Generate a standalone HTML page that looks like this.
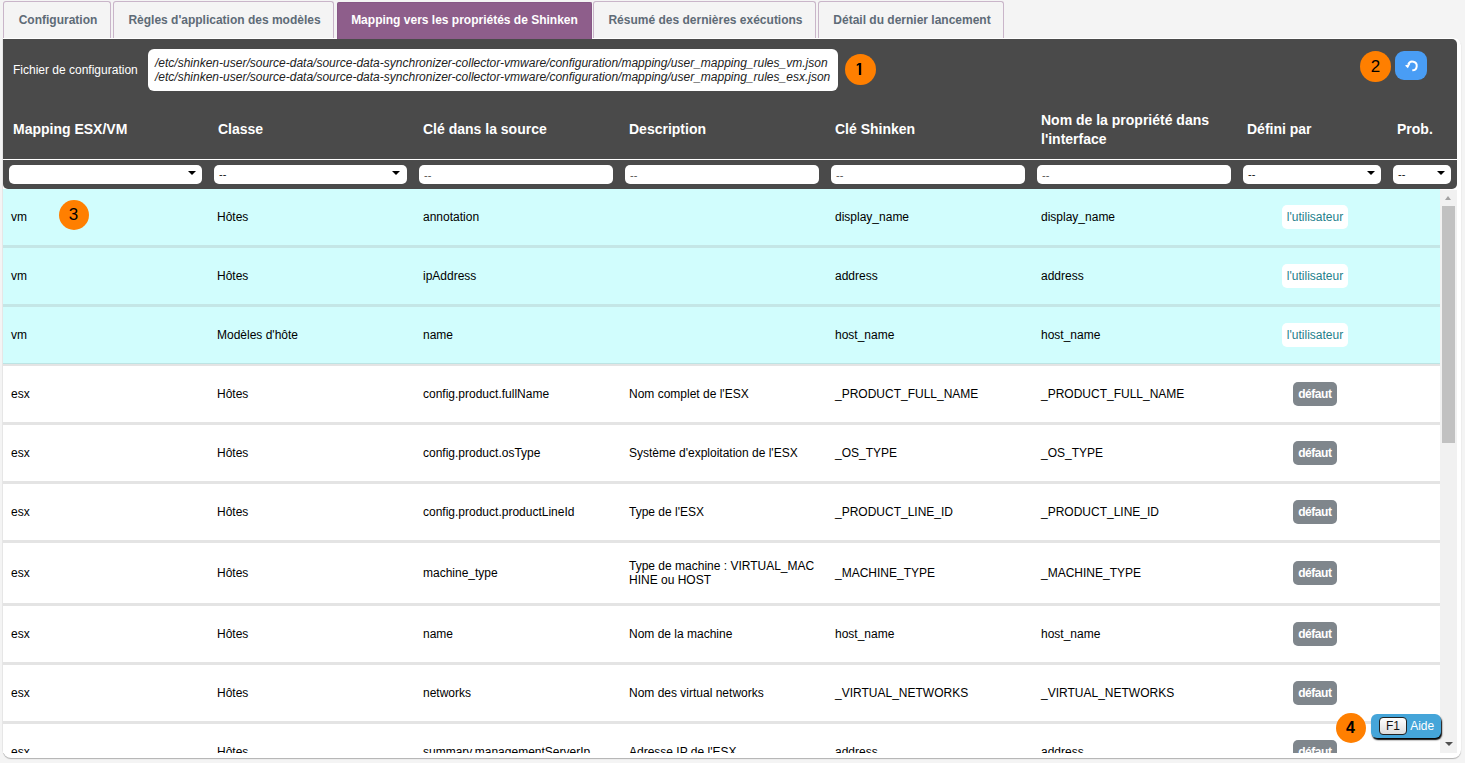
<!DOCTYPE html>
<html><head><meta charset="utf-8">
<style>
*{box-sizing:border-box;margin:0;padding:0}
html,body{width:1465px;height:763px;overflow:hidden;background:#f4f4f4;font-family:"Liberation Sans",sans-serif;font-size:12px;color:#000}
.abs{position:absolute}
.tab{position:absolute;z-index:2;top:1px;height:37px;border:1px solid #c9b5c9;border-bottom:none;border-radius:3px 3px 0 0;background:#f4f4f4;color:#5e6b77;font-weight:bold;font-size:12px;padding-left:2px;text-align:center;line-height:36px;white-space:nowrap}
.tab.active{padding-left:0;top:2px;height:37px;background:#8e5e8b;border:1px solid #875786;border-bottom:none;border-radius:2px 2px 0 0;color:#fff;line-height:35px}
#cont{position:absolute;left:3px;top:38px;width:1458px;height:720px;background:#fff;border-radius:0 7px 8px 8px;box-shadow:0 1px 1px rgba(0,0,0,.28),-0.5px 0 0 rgba(0,0,0,.06)}
#dark{position:absolute;left:3px;top:39px;width:1454px;height:150px;background:#4a4a4a;border-radius:0 5px 5px 5px}
.lbl{position:absolute;color:#fff;font-size:12px;white-space:nowrap}
.hd{position:absolute;color:#fff;font-weight:bold;font-size:14px;white-space:nowrap;line-height:19px}
.flt{position:absolute;top:165px;height:19px;background:#fff;border-radius:5px}
.flt .dd{position:absolute;left:5px;top:4px;font-size:11px;line-height:11px;color:#111}
.flt.inp .dd{color:#555;top:5px}
.flt .ar{position:absolute;top:6px;width:0;height:0;border-left:4px solid transparent;border-right:4px solid transparent;border-top:4.5px solid #000}
.badge{position:absolute;width:30px;height:30px;border-radius:50%;background:#ff7f00;color:#000;font-size:16px;text-align:center;line-height:30px}
#body{position:absolute;left:3px;top:189px;width:1437px;height:564px;overflow:hidden}
.row{position:relative;height:59px;border-bottom:3px solid #e4e4e4;background:#fff}
.row.c{background:#d1fdfd;border-bottom-color:#c4e6e6}
.row .t{position:absolute;white-space:nowrap;line-height:14px}
.ub{position:absolute;left:1279px;width:66px;height:24px;background:#fff;border-radius:5px;color:#24808b;text-align:center;line-height:24px}
.db{position:absolute;left:1290px;width:44px;height:24px;background:#7f868c;border-radius:5px;color:#fff;font-weight:bold;text-align:center;line-height:24px;font-size:12px;letter-spacing:-0.45px;text-indent:-0.45px}
#sb{position:absolute;left:1440px;top:190px;width:17px;height:563px;background:#f1f1f1}
</style></head><body>
<!-- tabs -->
<div class="tab" style="left:3px;width:108px">Configuration</div>
<div class="tab" style="left:113px;width:221px">Règles d'application des modèles</div>
<div class="tab active" style="left:337px;width:255px">Mapping vers les propriétés de Shinken</div>
<div class="tab" style="left:593px;width:223px">Résumé des dernières exécutions</div>
<div class="tab" style="left:818px;width:186px">Détail du dernier lancement</div>

<div id="cont"></div>
<div id="dark"></div>

<!-- config row -->
<div class="lbl" style="left:13px;top:63px;line-height:14px">Fichier de configuration</div>
<div class="abs" style="left:148px;top:49px;width:690px;height:42px;background:#fff;border-radius:6px;padding:7px 0 0 7px;font-style:italic;color:#222;line-height:14px;white-space:nowrap">/etc/shinken-user/source-data/source-data-synchronizer-collector-vmware/configuration/mapping/user_mapping_rules_vm.json<br>/etc/shinken-user/source-data/source-data-synchronizer-collector-vmware/configuration/mapping/user_mapping_rules_esx.json</div>
<div class="badge" style="left:845px;top:54px;width:31px;height:31px"><svg class="abs" style="left:0;top:0" width="31" height="31"><path d="M13.9 9 H16.2 V21 H13.9 V10.9 L11.8 11.9 V10.4 Z" fill="#000"/></svg></div>
<div class="badge" style="left:1360px;top:51px;width:31px;height:31px;line-height:32px;font-size:17px">2</div>
<div class="abs" style="left:1395px;top:51px;width:32px;height:29px;background:#499df5;border-radius:9px"><svg class="abs" style="left:5px;top:4px" width="22" height="22" viewBox="0 0 22 22"><path d="M12.3 15.3 A4.35 4.35 0 1 0 8.3 9.4" fill="none" stroke="#fff" stroke-width="2"/><path d="M5 10.6 L10.4 8.5 L7.9 13.3 Z" fill="#fff"/></svg></div>

<!-- header -->
<div class="hd" style="left:13px;top:120px">Mapping ESX/VM</div>
<div class="hd" style="left:218px;top:120px">Classe</div>
<div class="hd" style="left:423px;top:120px">Clé dans la source</div>
<div class="hd" style="left:629px;top:120px">Description</div>
<div class="hd" style="left:835px;top:120px">Clé Shinken</div>
<div class="hd" style="left:1041px;top:111px">Nom de la propriété dans<br>l'interface</div>
<div class="hd" style="left:1247px;top:120px">Défini par</div>
<div class="hd" style="left:1397px;top:120px">Prob.</div>
<div class="abs" style="left:3px;top:159px;width:1454px;height:1px;background:#fff"></div>

<!-- filters -->
<div class="flt" style="left:9px;width:193px"><div class="ar" style="left:179px"></div></div>
<div class="flt" style="left:214px;width:193px"><div class="dd">--</div><div class="ar" style="left:178px"></div></div>
<div class="flt inp" style="left:419px;width:194px"><div class="dd">--</div></div>
<div class="flt inp" style="left:625px;width:194px"><div class="dd">--</div></div>
<div class="flt inp" style="left:831px;width:194px"><div class="dd">--</div></div>
<div class="flt inp" style="left:1037px;width:194px"><div class="dd">--</div></div>
<div class="flt" style="left:1243px;width:138px"><div class="dd">--</div><div class="ar" style="left:124px"></div></div>
<div class="flt" style="left:1393px;width:58px"><div class="dd">--</div><div class="ar" style="left:44px"></div></div>

<div id="body">
<div class="row c"><div class="t" style="left:8px;top:21px">vm</div><div class="t" style="left:214px;top:21px">Hôtes</div><div class="t" style="left:420px;top:21px">annotation</div><div class="t" style="left:626px;top:21px"></div><div class="t" style="left:832px;top:21px">display_name</div><div class="t" style="left:1038px;top:21px">display_name</div><div class="ub" style="top:16px">l'utilisateur</div></div>
<div class="row c"><div class="t" style="left:8px;top:21px">vm</div><div class="t" style="left:214px;top:21px">Hôtes</div><div class="t" style="left:420px;top:21px">ipAddress</div><div class="t" style="left:626px;top:21px"></div><div class="t" style="left:832px;top:21px">address</div><div class="t" style="left:1038px;top:21px">address</div><div class="ub" style="top:16px">l'utilisateur</div></div>
<div class="row c" style="border-bottom-color:#e4e4e4"><div class="abs" style="left:0;top:56px;width:100%;height:1px;background:#bde4e4"></div><div class="t" style="left:8px;top:21px">vm</div><div class="t" style="left:214px;top:21px">Modèles d'hôte</div><div class="t" style="left:420px;top:21px">name</div><div class="t" style="left:626px;top:21px"></div><div class="t" style="left:832px;top:21px">host_name</div><div class="t" style="left:1038px;top:21px">host_name</div><div class="ub" style="top:16px">l'utilisateur</div></div>
<div class="row"><div class="t" style="left:8px;top:21px">esx</div><div class="t" style="left:214px;top:21px">Hôtes</div><div class="t" style="left:420px;top:21px">config.product.fullName</div><div class="t" style="left:626px;top:21px">Nom complet de l'ESX</div><div class="t" style="left:832px;top:21px">_PRODUCT_FULL_NAME</div><div class="t" style="left:1038px;top:21px">_PRODUCT_FULL_NAME</div><div class="db" style="top:16px">défaut</div></div>
<div class="row"><div class="t" style="left:8px;top:21px">esx</div><div class="t" style="left:214px;top:21px">Hôtes</div><div class="t" style="left:420px;top:21px">config.product.osType</div><div class="t" style="left:626px;top:21px">Système d'exploitation de l'ESX</div><div class="t" style="left:832px;top:21px">_OS_TYPE</div><div class="t" style="left:1038px;top:21px">_OS_TYPE</div><div class="db" style="top:16px">défaut</div></div>
<div class="row"><div class="t" style="left:8px;top:21px">esx</div><div class="t" style="left:214px;top:21px">Hôtes</div><div class="t" style="left:420px;top:21px">config.product.productLineId</div><div class="t" style="left:626px;top:21px">Type de l'ESX</div><div class="t" style="left:832px;top:21px">_PRODUCT_LINE_ID</div><div class="t" style="left:1038px;top:21px">_PRODUCT_LINE_ID</div><div class="db" style="top:16px">défaut</div></div>
<div class="row" style="height:63px"><div class="t" style="left:8px;top:23px">esx</div><div class="t" style="left:214px;top:23px">Hôtes</div><div class="t" style="left:420px;top:23px">machine_type</div><div class="t" style="left:626px;top:16px">Type de machine : VIRTUAL_MAC<br>HINE ou HOST</div><div class="t" style="left:832px;top:23px">_MACHINE_TYPE</div><div class="t" style="left:1038px;top:23px">_MACHINE_TYPE</div><div class="db" style="top:18px">défaut</div></div>
<div class="row"><div class="t" style="left:8px;top:21px">esx</div><div class="t" style="left:214px;top:21px">Hôtes</div><div class="t" style="left:420px;top:21px">name</div><div class="t" style="left:626px;top:21px">Nom de la machine</div><div class="t" style="left:832px;top:21px">host_name</div><div class="t" style="left:1038px;top:21px">host_name</div><div class="db" style="top:16px">défaut</div></div>
<div class="row"><div class="t" style="left:8px;top:21px">esx</div><div class="t" style="left:214px;top:21px">Hôtes</div><div class="t" style="left:420px;top:21px">networks</div><div class="t" style="left:626px;top:21px">Nom des virtual networks</div><div class="t" style="left:832px;top:21px">_VIRTUAL_NETWORKS</div><div class="t" style="left:1038px;top:21px">_VIRTUAL_NETWORKS</div><div class="db" style="top:16px">défaut</div></div>
<div class="row"><div class="t" style="left:8px;top:21px">esx</div><div class="t" style="left:214px;top:21px">Hôtes</div><div class="t" style="left:420px;top:21px">summary.managementServerIp</div><div class="t" style="left:626px;top:21px">Adresse IP de l'ESX</div><div class="t" style="left:832px;top:21px">address</div><div class="t" style="left:1038px;top:21px">address</div><div class="db" style="top:16px">défaut</div></div>
</div>
<div id="sb"></div>

<div class="badge" style="left:58.5px;top:199.5px;width:30px;height:30px;line-height:30px;font-size:17px">3</div>
<div id="thumb" class="abs" style="left:1442px;top:206px;width:13px;height:237px;background:#c1c1c1"></div>
<div class="abs" style="left:1445px;top:196px;width:0;height:0;border-left:3.5px solid transparent;border-right:3.5px solid transparent;border-bottom:4px solid #a3a3a3"></div>
<div class="abs" style="left:1445px;top:742px;width:0;height:0;border-left:4px solid transparent;border-right:4px solid transparent;border-top:4px solid #505050"></div>
<div class="badge" style="left:1335.5px;top:712.5px;width:30px;height:30px;line-height:30px;font-weight:bold;font-size:16px">4</div>
<div class="abs" style="left:1371px;top:714px;width:70px;height:24px;background:#45a5d9;border-radius:6px;box-shadow:1px 2px 1.5px #000">
 <div class="abs" style="left:8px;top:3px;width:28px;height:18px;border:1px solid #222;border-radius:4px;background:linear-gradient(#fff,#ddd);color:#111;font-size:12px;text-align:center;line-height:16px">F1</div>
 <div class="abs" style="left:39.2px;top:0;color:#fff;font-size:12px;line-height:24px">Aide</div>
</div>
</body></html>
